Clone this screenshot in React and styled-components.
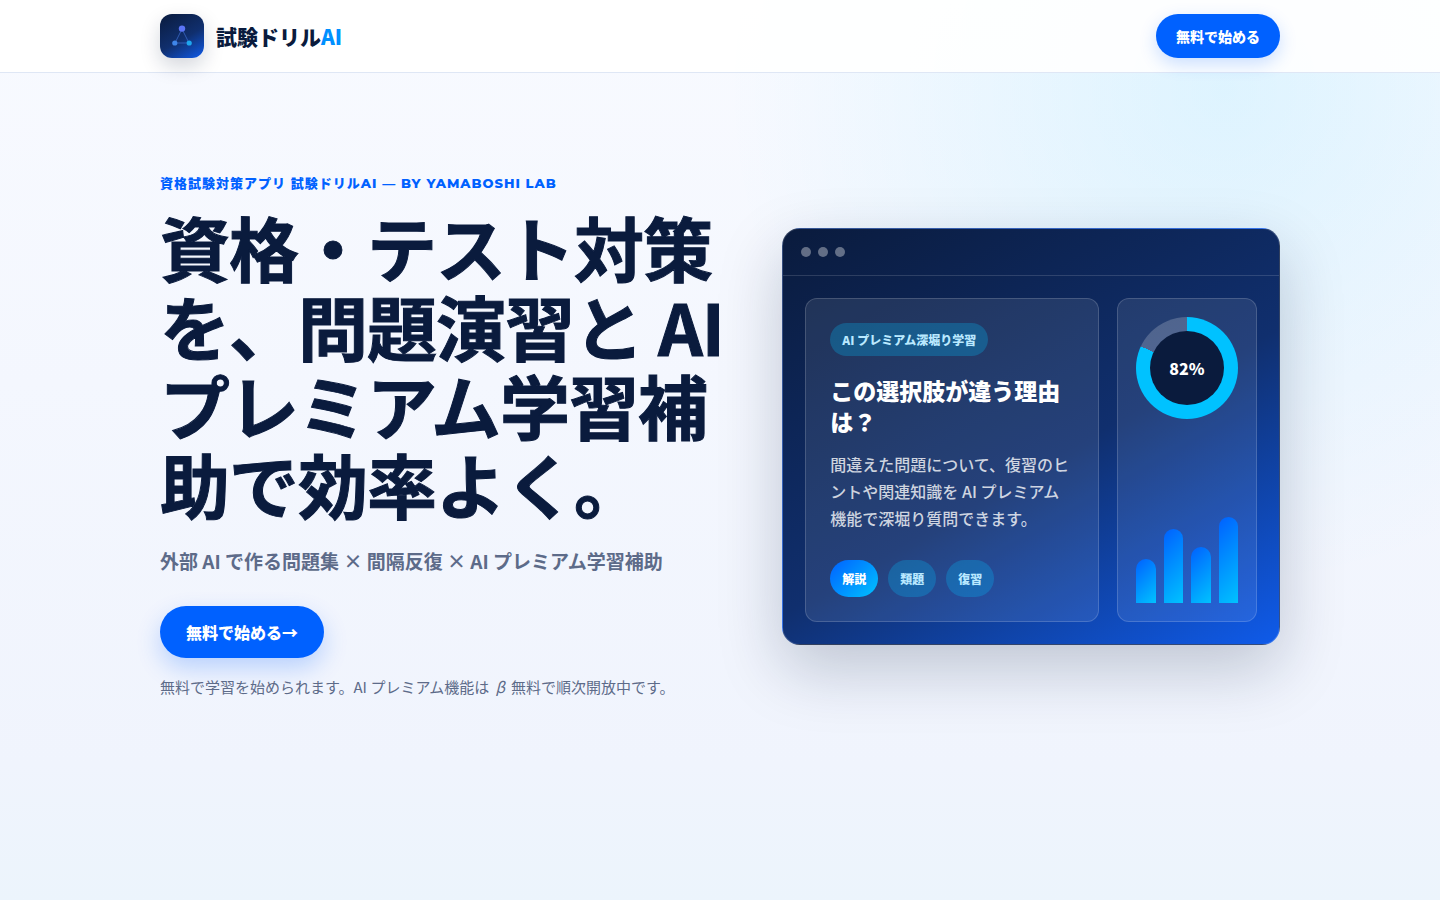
import React from 'react';
import styled, { createGlobalStyle, css } from 'styled-components';

const GlobalStyle = createGlobalStyle`
    * {
        box-sizing: border-box;
    }

    body {
        margin: 0;
        color: #0a1b3d;
        font-family: 'Noto Sans CJK JP', sans-serif;
        background: #edf3fc;
    }

    h1, h2, p {
        margin: 0;
    }
`;

const Page = styled.div`
    min-height: 100vh;
    background:
        radial-gradient(circle at 85% 10%, rgba(0, 194, 255, 0.1), transparent 34%),
        linear-gradient(180deg, #f8faff 0%, #f0f4fd 85%, #ecf4fc 100%);
`;

const Container = styled.div`
    width: 100%;
    max-width: 1168px;
    margin: 0 auto;
    padding: 0 24px;
`;

const Header = styled.header`
    background: rgba(255, 255, 255, 0.9);
    border-bottom: 1px solid #dfe7f5;
`;

const HeaderInner = styled(Container)`
    display: flex;
    align-items: center;
    justify-content: space-between;
    height: 72px;
`;

const Brand = styled.a`
    display: flex;
    align-items: center;
    gap: 12px;
    color: #0a1b3d;
    font-size: 21px;
    font-weight: 900;
    line-height: 30px;
    text-decoration: none;
`;

const BrandMark = styled.span`
    display: grid;
    place-items: center;
    width: 44px;
    height: 44px;
    border-radius: 12px;
    background: linear-gradient(150deg, #0a1b3d 0%, #102f6e 55%, #0f5bea 100%);
    box-shadow: 0 8px 20px rgba(10, 27, 61, 0.18);
`;

const BrandAccent = styled.span`
    color: #0090ff;
`;

const Button = styled.button`
    display: inline-flex;
    align-items: center;
    justify-content: center;
    height: ${({ $large }) => ($large ? 52 : 44)}px;
    padding: 0 ${({ $large }) => ($large ? 26 : 20)}px;
    border: 0;
    border-radius: 999px;
    color: #fff;
    background: #0061ff;
    box-shadow: ${({ $large }) =>
        $large ? '0 10px 24px rgba(0, 97, 255, 0.24)' : '0 6px 18px rgba(0, 97, 255, 0.2)'};
    font-family: inherit;
    font-size: ${({ $large }) => ($large ? 16 : 14)}px;
    font-weight: 900;
    cursor: pointer;
`;

const Hero = styled(Container)`
    display: grid;
    grid-template-columns: 1.138fr 1fr;
    align-items: center;
    gap: 56px;
    padding-top: 100px;
    padding-bottom: 100px;

    @media (max-width: 960px) {
        grid-template-columns: 1fr;
    }
`;

const Eyebrow = styled.p`
    color: #0061ff;
    font-family: Montserrat, Inter, 'Noto Sans CJK JP', sans-serif;
    font-size: 13px;
    font-weight: 800;
    line-height: 20px;
    letter-spacing: 1px;
`;

const Headline = styled.h1`
    margin-top: 14px;
    font-size: 70px;
    font-weight: 700;
    line-height: 79px;
    letter-spacing: -1px;
    -webkit-text-stroke: 1px currentColor;
`;

const Lead = styled.p`
    margin: 22px 0 29px;
    color: #5d6b89;
    font-size: 19px;
    font-weight: 700;
    line-height: 32px;
`;

const Note = styled.p`
    margin-top: 16px;
    color: #5d6b89;
    font-size: 15px;
    line-height: 26px;
`;

const Beta = styled.i`
    display: inline-block;
    width: 1em;
    text-align: center;
`;

const Preview = styled.section`
    border: 1px solid rgba(255, 255, 255, 0.16);
    border-radius: 18px;
    color: #fff;
    background: linear-gradient(150deg, #0a1b3d 0%, #102f6e 55%, #0f5bea 100%);
    box-shadow: 0 24px 64px rgba(10, 27, 61, 0.22);
    overflow: hidden;
`;

const PreviewBar = styled.div`
    display: flex;
    gap: 7px;
    padding: 18px;
    border-bottom: 1px solid rgba(255, 255, 255, 0.14);
`;

const Dot = styled.span`
    width: 10px;
    height: 10px;
    border-radius: 50%;
    background: rgba(255, 255, 255, 0.36);
`;

const PreviewBody = styled.div`
    display: grid;
    grid-template-columns: 1fr 140px;
    gap: 18px;
    padding: 22px;
`;

const panel = css`
    border: 1px solid rgba(255, 255, 255, 0.16);
    border-radius: 12px;
    background: rgba(255, 255, 255, 0.09);
`;

const QuestionPanel = styled.div`
    ${panel}
    padding: 24px;
`;

const StatsPanel = styled.div`
    ${panel}
    display: flex;
    flex-direction: column;
    justify-content: space-between;
    padding: 18px;
`;

const Chip = styled.span`
    display: inline-flex;
    align-items: center;
    height: ${({ $tall }) => ($tall ? 37 : 33)}px;
    padding: 0 12px;
    border-radius: 999px;
    color: ${({ $active }) => ($active ? '#fff' : '#b9e9ff')};
    background: ${({ $active }) =>
        $active ? 'linear-gradient(135deg, #0061ff, #00c2ff)' : 'rgba(0, 194, 255, 0.26)'};
    font-size: 12px;
    font-weight: 900;
`;

const ChipRow = styled.div`
    display: flex;
    gap: 10px;
    margin-top: 28px;
`;

const Question = styled.h2`
    margin-top: 19px;
    font-size: 23px;
    font-weight: 900;
    line-height: 31px;
`;

const Answer = styled.p`
    margin-top: 14px;
    color: rgba(255, 255, 255, 0.78);
    font-size: 16px;
    font-weight: 500;
    line-height: 27px;
`;

const Donut = styled.div`
    display: grid;
    place-items: center;
    width: 102px;
    height: 102px;
    border-radius: 50%;
    background: conic-gradient(#00c2ff 0 82%, rgba(255, 255, 255, 0.2) 82% 100%);
`;

const DonutValue = styled.strong`
    display: grid;
    place-items: center;
    width: 74px;
    height: 74px;
    border-radius: 50%;
    background: #0a1b3d;
    font-size: 16px;
    font-weight: 900;
`;

const Bars = styled.div`
    display: flex;
    align-items: flex-end;
    gap: 8px;
    height: 96px;
`;

const Bar = styled.span`
    flex: 1;
    border-radius: 999px 999px 0 0;
    background: linear-gradient(135deg, #0061ff, #00c2ff);
`;

const topics = ['解説', '類題', '復習'];
const bars = [46, 77, 58, 90];

function Logo() {
    return (
        <svg width="24" height="24" viewBox="0 0 24 24" fill="none" aria-hidden="true">
            <path d="M12 5L5 19M12 5l7 14M5 19h14" stroke="#3f6fd0" strokeOpacity="0.7" />
            <circle cx="12" cy="4.6" r="3.2" fill="#5b74f5" />
            <circle cx="4.8" cy="19" r="2.6" fill="#3f86ea" />
            <circle cx="19.2" cy="19" r="2.6" fill="#1ea7f0" />
        </svg>
    );
}

function App() {
    return (
        <Page lang="ja">
            <GlobalStyle />
            <Header>
                <HeaderInner>
                    <Brand href="#">
                        <BrandMark><Logo /></BrandMark>
                        <span>試験ドリル<BrandAccent>AI</BrandAccent></span>
                    </Brand>
                    <Button type="button">無料で始める</Button>
                </HeaderInner>
            </Header>
            <Hero as="main">
                <div>
                    <Eyebrow>資格試験対策アプリ 試験ドリルAI — BY YAMABOSHI LAB</Eyebrow>
                    <Headline>資格・テスト対策を、問題演習と AI プレミアム学習補助で効率よく。</Headline>
                    <Lead>外部 AI で作る問題集 × 間隔反復 × AI プレミアム学習補助</Lead>
                    <Button type="button" $large>無料で始める→</Button>
                    <Note>無料で学習を始められます。AI プレミアム機能は <Beta>β</Beta> 無料で順次開放中です。</Note>
                </div>
                <Preview>
                    <PreviewBar>
                        <Dot />
                        <Dot />
                        <Dot />
                    </PreviewBar>
                    <PreviewBody>
                        <QuestionPanel>
                            <Chip>AI プレミアム深堀り学習</Chip>
                            <Question>この選択肢が違う理由は？</Question>
                            <Answer>間違えた問題について、復習のヒントや関連知識を AI プレミアム機能で深堀り質問できます。</Answer>
                            <ChipRow>
                                {topics.map((topic, index) => (
                                    <Chip key={topic} $tall $active={index === 0}>{topic}</Chip>
                                ))}
                            </ChipRow>
                        </QuestionPanel>
                        <StatsPanel>
                            <Donut>
                                <DonutValue>82%</DonutValue>
                            </Donut>
                            <Bars>
                                {bars.map((value) => (
                                    <Bar key={value} style={{ height: `${value}%` }} />
                                ))}
                            </Bars>
                        </StatsPanel>
                    </PreviewBody>
                </Preview>
            </Hero>
        </Page>
    );
}

export default App;
